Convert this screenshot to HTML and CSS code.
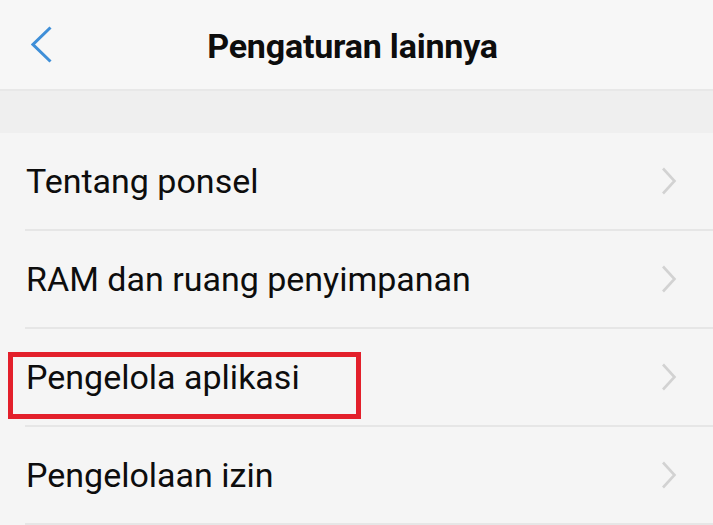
FILE: index.html
```html
<!DOCTYPE html>
<html lang="id">
<head>
<meta charset="utf-8">
<title>Pengaturan lainnya</title>
<link rel="stylesheet" href="styles.css">
</head>
<body>
<div class="screen">
  <header class="topbar">
    <span class="back">
      <svg width="22" height="38" viewBox="0 0 22 38"><polyline points="19.5,1.5 2,18.5 19.5,35.5" fill="none" stroke="#3f8fd8" stroke-width="3" stroke-linecap="butt" stroke-linejoin="miter"/></svg>
    </span>
    <h1 class="title">Pengaturan lainnya</h1>
  </header>
  <div class="band"></div>
  <ul class="list">
    <li class="row"><span class="label">Tentang ponsel</span><svg class="chev" width="16" height="28" viewBox="0 0 16 28"><polyline points="2,1.5 13.5,14 2,26.5" fill="none" stroke="#d2d2d2" stroke-width="2.6"/></svg></li>
    <li class="row"><span class="label">RAM dan ruang penyimpanan</span><svg class="chev" width="16" height="28" viewBox="0 0 16 28"><polyline points="2,1.5 13.5,14 2,26.5" fill="none" stroke="#d2d2d2" stroke-width="2.6"/></svg></li>
    <li class="row"><span class="label">Pengelola aplikasi</span><svg class="chev" width="16" height="28" viewBox="0 0 16 28"><polyline points="2,1.5 13.5,14 2,26.5" fill="none" stroke="#d2d2d2" stroke-width="2.6"/></svg></li>
    <li class="row"><span class="label">Pengelolaan izin</span><svg class="chev" width="16" height="28" viewBox="0 0 16 28"><polyline points="2,1.5 13.5,14 2,26.5" fill="none" stroke="#d2d2d2" stroke-width="2.6"/></svg></li>
  </ul>
  <div class="highlight"></div>
</div>
</body>
</html>
```
FILE: styles.css
```css
* { box-sizing: border-box; }
html, body { margin: 0; padding: 0; }
body {
  width: 713px;
  height: 525px;
  overflow: hidden;
  background: #f5f5f5;
  font-family: Roboto, "Liberation Sans", sans-serif;
  color: #111;
}
.screen {
  position: relative;
  width: 713px;
  height: 525px;
}
.topbar {
  height: 91px;
  background: #f7f7f7;
  border-bottom: 2px solid #e8e8e8;
  display: flex;
  align-items: center;
  justify-content: center;
  position: relative;
}
.back {
  position: absolute;
  left: 31px;
  top: 26px;
  display: block;
  line-height: 0;
}
.title {
  margin: 0;
  font-size: 34px;
  font-weight: 700;
  color: #0d0d0d;
  letter-spacing: -0.2px;
  transform: translate(-4px, 1px);
}
.band {
  height: 42px;
  background: #efefef;
}
.list {
  list-style: none;
  margin: 0;
  padding: 0;
}
.row {
  height: 98px;
  display: flex;
  align-items: center;
  justify-content: space-between;
  margin-left: 25px;
  padding-left: 1px;
  padding-right: 36px;
  border-bottom: 2px solid #e6e6e6;
}
.label {
  font-size: 34px;
  color: #0d0d0d;
}
.chev { display: block; }
.highlight {
  position: absolute;
  left: 8px;
  top: 352px;
  width: 353px;
  height: 67px;
  border: 5px solid #e3202b;
}
```
